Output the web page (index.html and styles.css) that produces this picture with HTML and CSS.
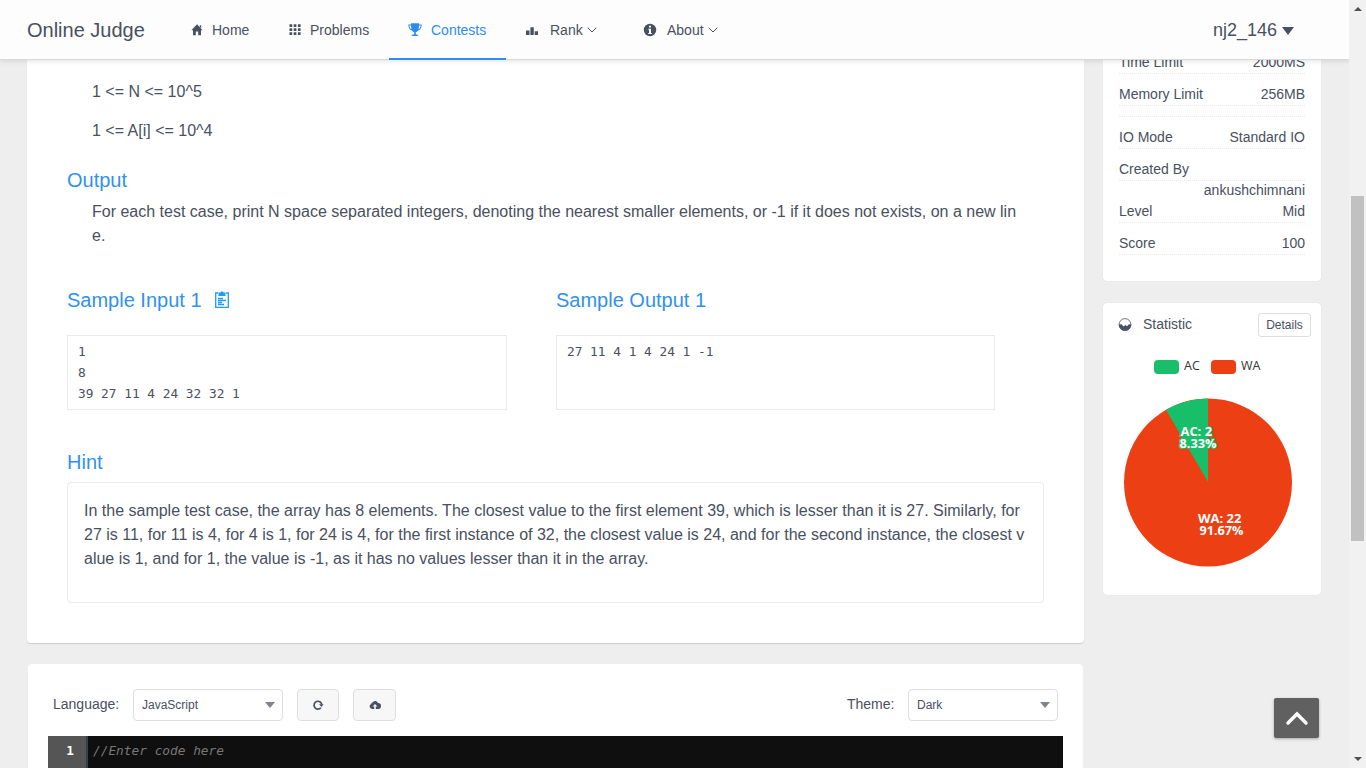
FILE: index.html
```
<!DOCTYPE html>
<html lang="en">
<head>
<meta charset="utf-8">
<title>Online Judge</title>
<link rel="stylesheet" href="styles.css">
</head>
<body>
<div class="app">
  <div class="page">
    <header class="header">
      <div class="brand">Online Judge</div>
      <nav class="nav">
        <a class="nav-item home"><svg class="nav-icon" viewBox="0 0 14 14"><path d="M7 1.300 12.600 7.200H11V12.200H8.200V8.400H5.800V12.200H3V7.200H1.400ZM9.800 2.200h1.400v3L9.800 4Z"/></svg><span>Home</span></a>
        <a class="nav-item problems"><svg class="nav-icon" viewBox="0 0 14 14"><path d="M1.5 1.2h2.7v2.7H1.5zM5.700 1.200h2.700v2.700H5.700zM9.900 1.200h2.700v2.700H9.900zM1.500 5.200h2.700v2.700H1.500zM5.700 5.200h2.700v2.700H5.700zM9.900 5.200h2.700v2.700H9.900zM1.500 9.200h2.700v2.700H1.500zM5.700 9.200h2.700v2.700H5.700zM9.900 9.200h2.700v2.700H9.900z"/></svg><span>Problems</span></a>
        <a class="nav-item contests active"><svg class="nav-icon" viewBox="0 0 14 14"><path d="M3 .3h8v1.200h2.700C13.600 4.700 12.600 6.800 10 7.400 9.300 8.500 8.500 9 7.800 9.200v2c1.300.2 2.400.7 2.600 1.800H3.600c.2-1.100 1.300-1.600 2.600-1.800v-2C5.500 9 4.700 8.500 4 7.400 1.400 6.800.4 4.700.3 1.500H3zM1.300 2.400C1.500 4.300 2.200 5.500 3.500 6.100 3.200 5.100 3 3.800 3 2.400zM12.700 2.400H11C11 3.800 10.800 5.100 10.500 6.100 11.800 5.500 12.500 4.300 12.700 2.400z"/></svg><span>Contests</span></a>
        <a class="nav-item rank"><svg class="nav-icon" viewBox="0 0 14 14"><path d="M1 7.500h3.500V12H1zM5.400 4.200h3.400V12H5.400zM9.700 8.300h3.300V12H9.700z"/></svg><span>Rank</span><svg class="chevron" viewBox="0 0 10 6"><path d="M.7.7 5 5 9.300.7"/></svg></a>
        <a class="nav-item about"><svg class="nav-icon" viewBox="0 0 14 14"><circle cx="7" cy="7" r="6.200"/><path class="cutout" d="M6 2.700h2v1.700H6zM5.300 5.700H8v4.200h.8v1H5.200v-1H6V6.700h-.7z"/></svg><span>About</span><svg class="chevron" viewBox="0 0 10 6"><path d="M.7.7 5 5 9.300.7"/></svg></a>
      </nav>
      <div class="user"><span>nj2_146</span><i class="caret"></i></div>
    </header>

    <main class="content">
      <div class="primary">
        <section class="card problem">
          <p class="text">1 &lt;= N &lt;= 10^5</p>
          <p class="text">1 &lt;= A[i] &lt;= 10^4</p>
          <h2 class="title output-title">Output</h2>
          <p class="text output-text">For each test case, print N space separated integers, denoting the nearest smaller elements, or -1 if it does not exists, on a new lin<br>e.</p>
          <div class="samples">
            <div class="sample">
              <h2 class="title">Sample Input 1<svg class="copy" viewBox="0 0 16 18"><path class="line" d="M4 2H1.700v14.300h12.600V2H12M4 7.500h5M4 9.500h8M4 11.500h4M4 13.500h6"/><path class="fill" d="M4.500 1.500h2L7 .5h2l.5 1h2V5h-7z"/></svg></h2>
              <pre class="sample-box">1
8
39 27 11 4 24 32 32 1</pre>
            </div>
            <div class="sample second">
              <h2 class="title">Sample Output 1</h2>
              <pre class="sample-box">27 11 4 1 4 24 1 -1</pre>
            </div>
          </div>
          <h2 class="title hint-title">Hint</h2>
          <div class="hint">In the sample test case, the array has 8 elements. The closest value to the first element 39, which is lesser than it is 27. Similarly, for<br>27 is 11, for 11 is 4, for 4 is 1, for 24 is 4, for the first instance of 32, the closest value is 24, and for the second instance, the closest v<br>alue is 1, and for 1, the value is -1, as it has no values lesser than it in the array.</div>
        </section>

        <section class="card editor">
          <div class="toolbar">
            <span class="label">Language:</span>
            <div class="select"><span>JavaScript</span><i class="caret small"></i></div>
            <button class="tool"><svg viewBox="0 0 12 12"><path class="ring" d="M8.900 8.700A3.900 3.900 0 1 1 9.800 5.600"/><path d="M7 5.200h4.600L9.500 7.900z"/></svg></button>
            <button class="tool upload"><svg viewBox="0 0 12 12"><path d="M3 9.900A2.500 2.500 0 0 1 2.200 5.100 2 2 0 0 1 4 3.300 2.700 2.700 0 0 1 9 4.100 2.900 2.900 0 0 1 9.200 9.900H6.800V7.600h1.600L6 5.100 3.600 7.600h1.600v2.300z"/></svg></button>
            <span class="label theme">Theme:</span>
            <div class="select"><span>Dark</span><i class="caret small"></i></div>
          </div>
          <div class="code"><div class="gutter">1</div><div class="code-line">//Enter code here</div></div>
        </section>
      </div>

      <aside class="side">
        <section class="card info">
          <div class="row"><span>Time Limit</span><span>2000MS</span></div>
          <div class="row"><span>Memory Limit</span><span>256MB</span></div>
          <div class="row"></div>
          <div class="row"><span>IO Mode</span><span>Standard IO</span></div>
          <div class="row"><span>Created By</span></div>
          <div class="creator">ankushchimnani</div>
          <div class="row tight"><span>Level</span><span>Mid</span></div>
          <div class="row"><span>Score</span><span>100</span></div>
        </section>
        <section class="card statistic">
          <div class="stat-head">
            <svg class="stat-icon" viewBox="0 0 14 14"><circle class="rim" cx="7" cy="6.500" r="5.900"/><path d="M.7 6.500 3.500 6.200 5.500 8.600 7.300 6.900 9 8.300 11 6.200 13.300 6.500A6.300 6.300 0 0 1 .7 6.500z"/></svg>
            <span class="stat-name">Statistic</span>
            <button class="details">Details</button>
          </div>
          <div class="legend"><i class="swatch ac"></i><span>AC</span><i class="swatch wa"></i><span>WA</span></div>
          <svg class="pie" viewBox="0 0 170 170">
            <circle class="wa-fill" cx="85" cy="85.500" r="84"/>
            <path class="ac-fill" d="M85 85V1.500A84 84 0 0 0 43 12.750z"/>
            <text class="ac-label" x="57.500" y="38.500" textLength="31.500" lengthAdjust="spacingAndGlyphs">AC: 2</text>
            <text class="ac-label" x="56.500" y="50.500" textLength="37" lengthAdjust="spacingAndGlyphs">8.33%</text>
            <text x="75" y="125.500" textLength="43.500" lengthAdjust="spacingAndGlyphs">WA: 22</text>
            <text x="76.500" y="137.500" textLength="44" lengthAdjust="spacingAndGlyphs">91.67%</text>
          </svg>
        </section>
      </aside>
    </main>
    <button class="back-top"><svg viewBox="0 0 24 16"><path d="M3 13 12 4 21 13"/></svg></button>
  </div>
  <div class="scrollbar"><i class="arrow up"></i><i class="thumb"></i><i class="arrow down"></i></div>
</div>
</body>
</html>
```
FILE: styles.css
```
* { box-sizing: border-box; }
body { margin: 0; background: #eee; color: #495060; font: 14px/21px "Liberation Sans", Arial, sans-serif; overflow: hidden; }
h2, p, pre { margin: 0; font-weight: 400; }
button { font: inherit; color: inherit; padding: 0; }
svg { flex: none; display: block; }
.app { display: flex; width: 1366px; height: 768px; }
.page { width: 1349px; height: 768px; position: relative; overflow: hidden; }

.header { display: flex; align-items: center; height: 60px; padding-left: 27px; background: #fdfdfd; border-bottom: 1px solid #d9d9d9; box-shadow: 0 1px 5px rgba(0,0,0,.12); position: relative; z-index: 2; }
.brand { width: 150px; padding-top: 2px; font-size: 20px; }
.nav { display: flex; height: 60px; padding-top: 1px; }
.nav-item { display: flex; align-items: center; height: 59px; padding-top: 2px; padding-left: 13px; border-bottom: 2px solid transparent; }
.nav-icon { width: 14px; height: 14px; margin-right: 8px; fill: currentColor; }
.home { width: 97px; }
.problems { width: 115px; padding-left: 14px; }
.contests { width: 117px; padding-left: 19px; }
.contests .nav-icon { margin-right: 9px; }
.rank { width: 118px; padding-left: 19px; }
.rank .nav-icon { margin-right: 11px; }
.about { padding-left: 19px; }
.about .nav-icon { margin-right: 10px; }
.active { color: #2d8cf0; border-color: #2d8cf0; }
.chevron { width: 10px; height: 6px; margin-left: 4px; fill: none; stroke: currentColor; stroke-width: 1; }
.cutout { fill: #fdfdfd; }
.user { display: flex; align-items: center; gap: 5px; margin-left: auto; padding: 2px 55px 0 0; font-size: 18px; }
.caret { border: 6px solid transparent; border-top: 8px solid #495060; border-bottom: 0; }
.caret.small { margin-right: -1px; border-width: 6px 5px 0; border-top-color: #80848f; }

.content { display: flex; gap: 19px; height: 708px; padding-left: 27px; overflow: hidden; }
.primary { width: 1057px; }
.card { background: #fff; border-radius: 4px; }
.problem { height: 583px; padding: 20px 40px 0; border-radius: 0 0 4px 4px; box-shadow: 0 1px 1px rgba(0,0,0,.15); }
.text { padding-left: 25px; margin-bottom: 15px; font-size: 16px; line-height: 24px; white-space: nowrap; }
.title { color: #3091f2; font-size: 20px; line-height: 30px; }
.output-title { margin-top: 22px; }
.output-text { margin: 5px 0 37px; }
.samples { display: flex; gap: 49px; }
.sample { width: 440px; }
.second { width: 439px; }
.sample .title { display: flex; align-items: center; }
.copy { width: 16px; height: 18px; margin-left: 12px; }
.copy .line { fill: none; stroke: #1c9bff; stroke-width: 1.3; }
.copy .fill { fill: #1c9bff; }
.sample-box { height: 75px; margin-top: 20px; padding: 5px 10px; border: 1px solid #e9eaec; font: 12.8px/21px "DejaVu Sans Mono", monospace; }
.hint-title { margin-top: 37px; }
.hint { height: 121px; width: 977px; margin-top: 5px; padding: 16px; border: 1px solid #e9eaec; border-radius: 4px; font-size: 16px; line-height: 24px; white-space: nowrap; }

.editor { width: 1055px; height: 130px; margin: 21px 0 0 1px; padding: 25px 20px 0; }
.toolbar { display: flex; align-items: center; height: 32px; padding: 0 5px; }
.label { width: 80px; padding-bottom: 2px; }
.select { display: flex; align-items: center; justify-content: space-between; width: 150px; height: 32px; padding: 0 8px; border: 1px solid #dddee1; border-radius: 4px; font-size: 12px; }
.tool { display: flex; align-items: center; justify-content: center; width: 42px; height: 32px; margin-left: 14px; background: #f7f7f7; border: 1px solid #dddee1; border-radius: 4px; }
.tool svg { width: 12px; height: 12px; fill: #495060; }
.tool .ring { fill: none; stroke: #495060; stroke-width: 1.7; }
.upload { width: 43px; }
.theme { width: 61px; margin-left: auto; }
.code { display: flex; height: 60px; margin-top: 15px; background: #0f0f0f; font: 12.8px/21px "DejaVu Sans Mono", monospace; }
.gutter { width: 40px; padding: 4px 12px 0 0; background: #555; border-right: 2px solid #34404f; color: #fff; text-align: right; font-weight: 700; }
.code-line { padding: 4px 0 0 5px; color: #777; font-style: italic; }

.side { width: 218px; margin-top: -18px; }
.info { height: 239px; padding: 0 16px; box-shadow: 0 0 1px rgba(0,0,0,.15); }
.row { display: flex; justify-content: space-between; padding-top: 10px; border-bottom: 1px dotted #e9eaec; }
.row.tight { padding-top: 0; }
.creator { height: 20px; line-height: 19px; text-align: right; }
.statistic { height: 292px; margin-top: 22px; padding-top: 10px; box-shadow: 0 0 1px rgba(0,0,0,.15); }
.stat-head { display: flex; align-items: center; height: 24px; padding: 0 10px 0 15px; }
.stat-icon { width: 14px; height: 14px; margin-right: 11px; fill: #495060; }
.stat-name { padding-bottom: 2px; }
.rim { fill: none; stroke: #495060; stroke-width: .8; }
.details { width: 53px; height: 24px; margin-left: auto; background: #fff; border: 1px solid #dddee1; border-radius: 3px; font-size: 12px; }
.legend { display: flex; align-items: center; height: 17px; margin: 20px 0 0 51px; color: #333; font: 12.5px/16px "Open Sans", sans-serif; }
.legend span { width: 27px; padding-left: 5px; }
.swatch { width: 25px; height: 14px; margin-top: 2px; border-radius: 4px; }
.swatch.wa { margin-left: 5px; }
.ac { background: #19be6b; }
.wa { background: #ed3f14; }
.pie { width: 170px; height: 170px; margin: 23px 0 0 20px; font: 700 12px "Open Sans", sans-serif; fill: #fff; }
.wa-fill { fill: #ed3f14; }
.ac-fill { fill: #19be6b; }
.ac-label { stroke: #19be6b; stroke-width: 2px; paint-order: stroke; }

.back-top { display: flex; align-items: center; justify-content: center; width: 45px; height: 40px; position: absolute; right: 30px; bottom: 30px; background: #606060; border: 0; border-radius: 2px; box-shadow: 0 1px 3px rgba(0,0,0,.3); }
.back-top svg { width: 24px; height: 16px; fill: none; stroke: #fff; stroke-width: 3.4; stroke-linecap: round; }

.scrollbar { display: flex; flex-direction: column; align-items: center; width: 17px; height: 768px; padding: 7px 0; background: #f1f1f1; }
.thumb { width: 13px; height: 345px; margin-top: 185px; background: #c1c1c1; }
.arrow { border: 4px solid transparent; }
.up { border-top: 0; border-bottom-color: #505050; }
.down { margin-top: auto; border-bottom: 0; border-top-color: #505050; }
```
